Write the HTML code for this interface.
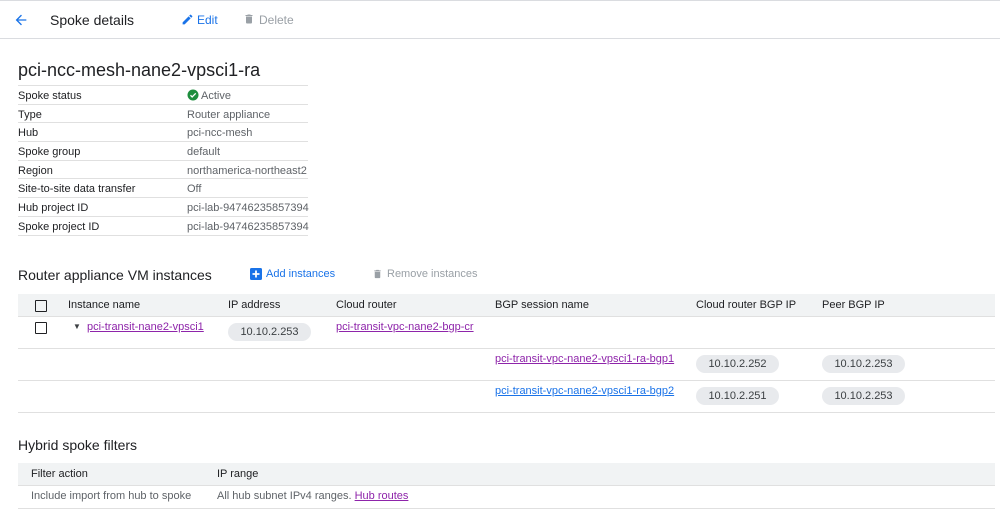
<!DOCTYPE html><html><head><style>
body{margin:0;width:1000px;height:511px;overflow:hidden;background:#fff;font-family:"Liberation Sans",sans-serif;color:#202124;position:relative}
.a{position:absolute;white-space:nowrap}
.s{font-size:11px}
.g{color:#5f6368}
.l{color:#8e24aa;text-decoration:underline;font-size:11px}
.lb{color:#1a73e8;text-decoration:underline;font-size:11px}
.hl{position:absolute;height:1px;background:#e0e0e0}
.chip{position:absolute;background:#e8eaed;border-radius:10px;height:18px;line-height:18px;font-size:11px;color:#3c4043;text-align:center}
.cb{position:absolute;width:10px;height:10px;border:1.5px solid #202124;border-radius:1px}
</style></head><body>
<div class="hl" style="left:0;top:0;width:1000px;background:#dadce0"></div>
<svg class="a" style="left:13px;top:12px" width="16" height="16" viewBox="0 0 24 24"><path d="M20 11H7.8l5.6-5.6L12 4l-8 8 8 8 1.4-1.4L7.8 13H20z" fill="#1a73e8"/></svg>
<div class="a" style="left:50px;top:12px;font-size:14px">Spoke details</div>
<svg class="a" style="left:181px;top:13px" width="13" height="13" viewBox="0 0 24 24"><path d="M3 17.25V21h3.75L17.8 9.94l-3.75-3.75zM20.7 7.04a1 1 0 000-1.41l-2.34-2.34a1 1 0 00-1.41 0l-1.83 1.83 3.75 3.75z" fill="#1a73e8"/></svg>
<div class="a" style="left:197px;top:13px;font-size:12px;color:#1a73e8">Edit</div>
<svg class="a" style="left:243px;top:13px" width="12" height="12" viewBox="0 0 24 24"><path d="M6 19a2 2 0 002 2h8a2 2 0 002-2V7H6zM19 4h-3.5l-1-1h-5l-1 1H5v2h14z" fill="#9aa0a6"/></svg>
<div class="a" style="left:259px;top:13px;font-size:12px;color:#9aa0a6">Delete</div>
<div class="hl" style="left:0;top:38px;width:1000px;background:#dadce0"></div>
<div class="a" style="left:18px;top:60px;font-size:18px">pci-ncc-mesh-nane2-vpsci1-ra</div>
<div class="hl" style="left:18px;top:85px;width:290px"></div>
<div class="a s" style="left:18px;top:90px">Spoke status</div><svg class="a" style="left:187px;top:89px" width="12" height="12" viewBox="0 0 24 24"><circle cx="12" cy="12" r="11" fill="#1e8e3e"/><path d="M7 12.5l3.3 3.3L17.5 8.6" stroke="#fff" stroke-width="2.6" fill="none"/></svg><div class="a s g" style="left:201px;top:90px">Active</div>
<div class="hl" style="left:18px;top:104px;width:290px"></div>
<div class="a s" style="left:18px;top:109px">Type</div><div class="a s g" style="left:187px;top:109px">Router appliance</div>
<div class="hl" style="left:18px;top:122px;width:290px"></div>
<div class="a s" style="left:18px;top:127px">Hub</div><div class="a s g" style="left:187px;top:127px">pci-ncc-mesh</div>
<div class="hl" style="left:18px;top:141px;width:290px"></div>
<div class="a s" style="left:18px;top:146px">Spoke group</div><div class="a s g" style="left:187px;top:146px">default</div>
<div class="hl" style="left:18px;top:160px;width:290px"></div>
<div class="a s" style="left:18px;top:165px">Region</div><div class="a s g" style="left:187px;top:165px">northamerica-northeast2</div>
<div class="hl" style="left:18px;top:178px;width:290px"></div>
<div class="a s" style="left:18px;top:183px">Site-to-site data transfer</div><div class="a s g" style="left:187px;top:183px">Off</div>
<div class="hl" style="left:18px;top:197px;width:290px"></div>
<div class="a s" style="left:18px;top:202px">Hub project ID</div><div class="a s g" style="left:187px;top:202px">pci-lab-94746235857394</div>
<div class="hl" style="left:18px;top:216px;width:290px"></div>
<div class="a s" style="left:18px;top:221px">Spoke project ID</div><div class="a s g" style="left:187px;top:221px">pci-lab-94746235857394</div>
<div class="hl" style="left:18px;top:235px;width:290px"></div>

<div class="a" style="left:18px;top:267px;font-size:14px">Router appliance VM instances</div>
<svg class="a" style="left:250px;top:268px" width="12" height="12" viewBox="0 0 12 12"><rect width="12" height="12" rx="1.5" fill="#1a73e8"/><path d="M6 2.5v7M2.5 6h7" stroke="#fff" stroke-width="1.8"/></svg>
<div class="a" style="left:266px;top:268px;font-size:11px;color:#1a73e8">Add instances</div>
<svg class="a" style="left:372px;top:268px" width="11" height="12" viewBox="0 0 24 24"><path d="M6 19a2 2 0 002 2h8a2 2 0 002-2V7H6zM19 4h-3.5l-1-1h-5l-1 1H5v2h14z" fill="#9aa0a6"/></svg>
<div class="a" style="left:387px;top:268px;font-size:11px;color:#9aa0a6">Remove instances</div>

<div class="a" style="left:18px;top:294px;width:977px;height:22px;background:#f1f3f4;border-bottom:1px solid #e0e0e0"></div>
<div class="cb" style="left:35px;top:300px"></div>
<div class="a s" style="left:68px;top:299px">Instance name</div>
<div class="a s" style="left:228px;top:299px">IP address</div>
<div class="a s" style="left:336px;top:299px">Cloud router</div>
<div class="a s" style="left:495px;top:299px">BGP session name</div>
<div class="a s" style="left:696px;top:299px">Cloud router BGP IP</div>
<div class="a s" style="left:822px;top:299px">Peer BGP IP</div>
<div class="cb" style="left:35px;top:322px"></div>
<div class="a" style="left:73px;top:322px;font-size:8px;color:#3c4043">▼</div>
<div class="a l" style="left:87px;top:321px">pci-transit-nane2-vpsci1</div>
<div class="chip" style="left:228px;top:323px;width:83px">10.10.2.253</div>
<div class="a l" style="left:336px;top:321px">pci-transit-vpc-nane2-bgp-cr</div>
<div class="hl" style="left:18px;top:348px;width:977px"></div>
<div class="a l" style="left:495px;top:353px">pci-transit-vpc-nane2-vpsci1-ra-bgp1</div>
<div class="chip" style="left:696px;top:355px;width:83px">10.10.2.252</div>
<div class="chip" style="left:822px;top:355px;width:83px">10.10.2.253</div>
<div class="hl" style="left:18px;top:380px;width:977px"></div>
<div class="a lb" style="left:495px;top:385px">pci-transit-vpc-nane2-vpsci1-ra-bgp2</div>
<div class="chip" style="left:696px;top:387px;width:83px">10.10.2.251</div>
<div class="chip" style="left:822px;top:387px;width:83px">10.10.2.253</div>
<div class="hl" style="left:18px;top:412px;width:977px"></div>

<div class="a" style="left:18px;top:437px;font-size:14px">Hybrid spoke filters</div>
<div class="a" style="left:18px;top:463px;width:977px;height:22px;background:#f1f3f4;border-bottom:1px solid #e0e0e0"></div>
<div class="a s" style="left:31px;top:468px">Filter action</div>
<div class="a s" style="left:217px;top:468px">IP range</div>
<div class="a s g" style="left:31px;top:490px">Include import from hub to spoke</div>
<div class="a s g" style="left:217px;top:490px">All hub subnet IPv4 ranges. <span class="l">Hub routes</span></div>
<div class="hl" style="left:18px;top:508px;width:977px"></div>
</body></html>
